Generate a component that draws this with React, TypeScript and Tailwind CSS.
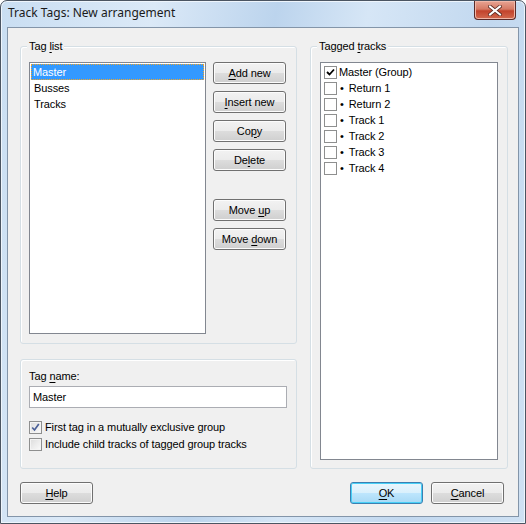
import React from 'react';

const font = { fontFamily: '"Liberation Sans", Arial, sans-serif' };

function Mn({ text, at }: { text: string; at: number }) {
  return (
    <span className="whitespace-pre">
      {text.slice(0, at)}
      <span className="underline underline-offset-[2px]">{text[at]}</span>
      {text.slice(at + 1)}
    </span>
  );
}

function Btn({ children, def = false, w = 'w-[73px]' }: { children: React.ReactNode; def?: boolean; w?: string }) {
  return (
    <button
      className={`${w} h-[22px] rounded-[3px] border text-[11px] text-black leading-none flex items-center justify-center ${
        def
          ? 'border-[#3c7fb1] bg-[linear-gradient(#eaf6fd_0%,#d9f0fc_50%,#bee6fd_50%,#a7d9f5_100%)] shadow-[inset_0_0_0_1px_#48d0f7]'
          : 'border-[#707070] bg-[linear-gradient(#f2f2f2_0%,#ebebeb_50%,#dddddd_50%,#cfcfcf_100%)] shadow-[inset_0_0_0_1px_#fcfcfc]'
      }`}
    >
      {children}
    </button>
  );
}

function Group({ label, className, children }: { label?: React.ReactNode; className: string; children: React.ReactNode }) {
  return (
    <div className={`relative border border-[#d5dfe5] rounded-[3px] shadow-[inset_1px_1px_0_#fff] ${className}`}>
      {label && (
        <span className="absolute left-[6px] -top-[8px] px-[2px] bg-[#f0f0f0] text-[11px] leading-[14px]">{label}</span>
      )}
      {children}
    </div>
  );
}

function FlatCheck({ checked }: { checked?: boolean }) {
  return (
    <span className="w-[13px] h-[13px] border border-[#8e8f8f] bg-white flex items-center justify-center shrink-0">
      {checked && (
        <svg width="9" height="9" viewBox="0 0 9 9">
          <path d="M1 4 L3.5 6.5 L8 1.5" stroke="#000" strokeWidth="1.8" fill="none" />
        </svg>
      )}
    </span>
  );
}

function VistaCheck({ checked }: { checked?: boolean }) {
  return (
    <span className="w-[13px] h-[13px] border border-[#8e8f8f] bg-[linear-gradient(135deg,#dcdcdc,#fbfbfb)] flex items-center justify-center shrink-0 shadow-[inset_0_0_0_1px_#f4f4f4]">
      {checked && (
        <svg width="9" height="9" viewBox="0 0 9 9">
          <path d="M1.2 4.5 L3.5 7 L7.8 1" stroke="#4a5f97" strokeWidth="1.7" fill="none" />
        </svg>
      )}
    </span>
  );
}

export default function App() {
  const tracks = [
    { name: 'Master (Group)', child: false },
    { name: 'Return 1', child: true },
    { name: 'Return 2', child: true },
    { name: 'Track 1', child: true },
    { name: 'Track 2', child: true },
    { name: 'Track 3', child: true },
    { name: 'Track 4', child: true },
  ];
  return (
    <div style={font} className="w-[526px] h-[524px] text-black text-[11px] tracking-[-0.1px]">
      <div className="relative w-full h-full rounded-t-[7px] border border-[#4b5562] bg-[linear-gradient(100deg,#c9def2_0%,#dbe9f7_25%,#bcd4ed_45%,#d6e6f6_60%,#c2d8ef_80%,#cfe1f3_100%)] shadow-[inset_0_0_0_1px_#eef5fc] px-[6px] pb-[6px] flex flex-col">
        {/* Title bar */}
        <div className="h-[26px] flex items-start pl-[1px] pt-[4px]">
          <span className="text-[12px] leading-[16px] text-[#1a1a1a] tracking-normal" style={{ fontFamily: '"Noto Sans", sans-serif' }}>
            Track Tags: New arrangement
          </span>
        </div>
        <div className="absolute right-[9px] top-0 w-[42px] h-[19px] rounded-b-[4px] border border-[#5a2a28] border-t-0 bg-[linear-gradient(#e8a493_0%,#d57a65_45%,#c2432c_55%,#d36a4f_100%)] shadow-[inset_0_0_0_1px_#f0b7a8] flex items-center justify-center">
          <svg width="14" height="11" viewBox="0 0 14 11">
            <path d="M2 1.5 L12 9.5 M12 1.5 L2 9.5" stroke="#5b2a22" strokeWidth="3.6" strokeLinecap="square" />
            <path d="M2 1.5 L12 9.5 M12 1.5 L2 9.5" stroke="#ffffff" strokeWidth="2" strokeLinecap="square" />
          </svg>
        </div>

        {/* Client area */}
        <div className="flex-1 border border-[#8395a9] bg-[#f0f0f0] flex flex-col pt-[18px] pl-[12px] pr-[10px] pb-[12px]">
          <div className="flex gap-[13px] h-[423px]">
            <div className="w-[277px] flex flex-col gap-[15px]">
              <Group label={<Mn text="Tag list" at={4} />} className="h-[298px] pt-[15px] pl-[8px] flex gap-[7px]">
                <div className="w-[177px] h-[272px] border border-[#828790] bg-white p-[1px] leading-[16px]">
                  <div className="h-[16px] bg-[#3399ff] text-white pl-[2px] outline-1 outline-dotted outline-[#f5a623] -outline-offset-1">Master</div>
                  <div className="h-[16px] pl-[3px]">Busses</div>
                  <div className="h-[16px] pl-[3px]">Tracks</div>
                </div>
                <div className="flex flex-col gap-[7px]">
                  <Btn><Mn text="Add new" at={0} /></Btn>
                  <Btn><Mn text="Insert new" at={0} /></Btn>
                  <Btn><Mn text="Copy" at={2} /></Btn>
                  <Btn><Mn text="Delete" at={2} /></Btn>
                  <div className="h-[14px]" />
                  <Btn><Mn text="Move up" at={5} /></Btn>
                  <Btn><Mn text="Move down" at={5} /></Btn>
                </div>
              </Group>
              <Group className="h-[110px] pt-[9px] pl-[8px] pr-[9px] flex flex-col">
                <div className="leading-[14px] h-[16px]"><Mn text="Tag name:" at={4} /></div>
                <div className="mt-[1px] h-[22px] border border-[#abadb3] bg-white flex items-center pl-[3px]">Master</div>
                <div className="mt-[13px] flex items-center gap-[3px] h-[13px]">
                  <VistaCheck checked />
                  <span>First tag in a mutually exclusive group</span>
                </div>
                <div className="mt-[4px] flex items-center gap-[3px] h-[13px]">
                  <VistaCheck />
                  <span>Include child tracks of tagged group tracks</span>
                </div>
              </Group>
            </div>
            <Group label={<Mn text="Tagged tracks" at={7} />} className="w-[198px] h-[423px] pt-[15px] pl-[9px]">
              <div className="w-[178px] h-[398px] border border-[#828790] bg-white pt-[1px] pl-[3px]">
                {tracks.map((t, i) => (
                  <div key={i} className="h-[16px] flex items-center gap-[2px]">
                    <FlatCheck checked={i === 0} />
                    {t.child && <span className="ml-[1px] mr-[3px]">•</span>}
                    <span>{t.name}</span>
                  </div>
                ))}
              </div>
            </Group>
          </div>
          <div className="mt-[13px] flex items-center">
            <Btn><Mn text="Help" at={0} /></Btn>
            <div className="flex-1" />
            <Btn def><Mn text="OK" at={0} /></Btn>
            <div className="w-[8px]" />
            <Btn><Mn text="Cancel" at={0} /></Btn>
            <div className="w-[4px]" />
          </div>
        </div>
      </div>
    </div>
  );
}
